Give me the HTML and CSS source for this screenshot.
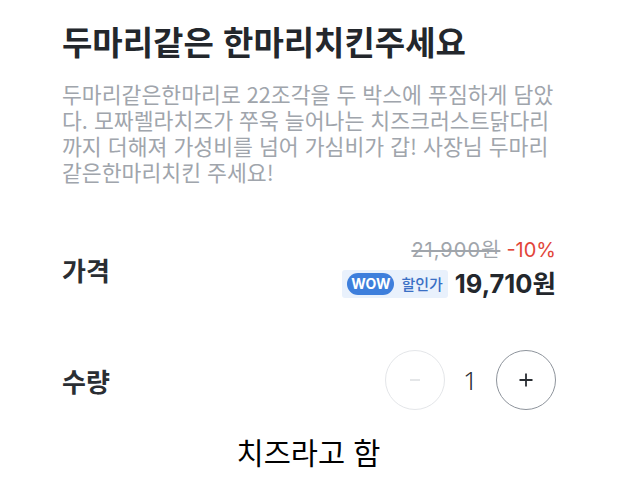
FILE: index.html
```html
<!DOCTYPE html>
<html lang="ko">
<head>
<meta charset="utf-8">
<link rel="stylesheet" href="styles.css">
</head>
<body>
<div class="product">
  <h1 class="title">두마리같은 한마리치킨주세요</h1>
  <p class="desc">두마리같은한마리로 22조각을 두 박스에 푸짐하게 담았<br>다. 모짜렐라치즈가 쭈욱 늘어나는 치즈크러스트닭다리<br>까지 더해져 가성비를 넘어 가심비가 갑! 사장님 두마리<br>같은한마리치킨 주세요!</p>
  <div class="row price-row">
    <div class="label">가격</div>
    <div class="prices">
      <div class="orig-line"><span class="orig">21,900원</span><span class="rate">-10%</span></div>
      <div class="sale-line">
        <span class="wow-box"><span class="wow">WOW</span><span class="wow-text">할인가</span></span>
        <span class="sale">19,710원</span>
      </div>
    </div>
  </div>
  <div class="row qty-row">
    <div class="label">수량</div>
    <div class="stepper">
      <button class="step minus" disabled><svg width="12" height="12" viewBox="0 0 12 12"><path d="M1 6h10" stroke="#d9dcdf" stroke-width="1.4"/></svg></button>
      <span class="count">1</span>
      <button class="step plus"><svg width="16" height="16" viewBox="0 0 16 16"><path d="M1.5 8h13M8 1.5v13" stroke="#2a2e33" stroke-width="1.8"/></svg></button>
    </div>
  </div>
</div>
<p class="caption">치즈라고 함</p>
</body>
</html>
```

FILE: styles.css
```css
html, body {
  margin: 0;
  padding: 0;
  background: #ffffff;
}
body {
  font-family: "Noto Sans CJK KR", "Noto Sans", sans-serif;
}
.product {
  padding: 20px 61px 0 62px;
}
.title {
  margin: 0;
  font-size: 33px;
  line-height: 42px;
  font-weight: 700;
  color: #23272c;
  letter-spacing: 0;
  white-space: nowrap;
}
.desc {
  margin: 19px 0 0;
  font-size: 21.6px;
  line-height: 26px;
  color: #a0a5ac;
  white-space: nowrap;
}
.row {
  display: flex;
  justify-content: space-between;
  align-items: center;
}
.label {
  font-size: 26px;
  font-weight: 700;
  color: #2a2e33;
}
.price-row {
  margin-top: 53px;
}
.prices {
  display: flex;
  flex-direction: column;
  align-items: flex-end;
  gap: 6px;
}
.orig-line {
  display: flex;
  gap: 6px;
  font-family: "Inter", "Noto Sans CJK KR", sans-serif;
  font-size: 20px;
  line-height: 24px;
}
.orig {
  color: #a0a5ab;
  letter-spacing: 1px;
  text-decoration: line-through;
  text-decoration-thickness: 1.5px;
}
.rate {
  color: #e2463a;
}
.sale-line {
  display: flex;
  align-items: center;
  gap: 7px;
}
.wow-box {
  display: flex;
  align-items: center;
  gap: 7px;
  height: 28px;
  box-sizing: border-box;
  background: #e9f1fc;
  border-radius: 3px;
  padding: 0 5px;
}
.wow {
  background: #3e7fdc;
  color: #fff;
  font-family: "Inter", "Noto Sans", sans-serif;
  font-weight: 700;
  font-size: 14px;
  line-height: 22px;
  width: 47px;
  text-align: center;
  border-radius: 11px;
}
.wow-text {
  color: #3a6fc5;
  font-size: 15px;
  font-weight: 500;
  line-height: 20px;
}
.sale {
  font-family: "Inter", "Noto Sans CJK KR", sans-serif;
  font-size: 25.5px;
  line-height: 32px;
  font-weight: 700;
  color: #23272c;
  letter-spacing: 0;
}
.qty-row {
  margin-top: 50px;
}
.stepper {
  display: flex;
  align-items: center;
}
.step {
  width: 60px;
  height: 60px;
  box-sizing: border-box;
  border-radius: 50%;
  background: #fff;
  padding: 0;
  display: flex;
  align-items: center;
  justify-content: center;
}
.minus {
  border: 1.5px solid #e4e6e9;
}
.plus {
  border: 1.5px solid #8e949c;
}
.count {
  width: 51px;
  text-align: center;
  font-size: 26px;
  font-weight: 300;
  color: #2a2e33;
  font-family: "Noto Sans", sans-serif;
}
.caption {
  margin: 23px 0 0;
  text-align: center;
  font-size: 29.5px;
  line-height: 36px;
  color: #000;
}
```
